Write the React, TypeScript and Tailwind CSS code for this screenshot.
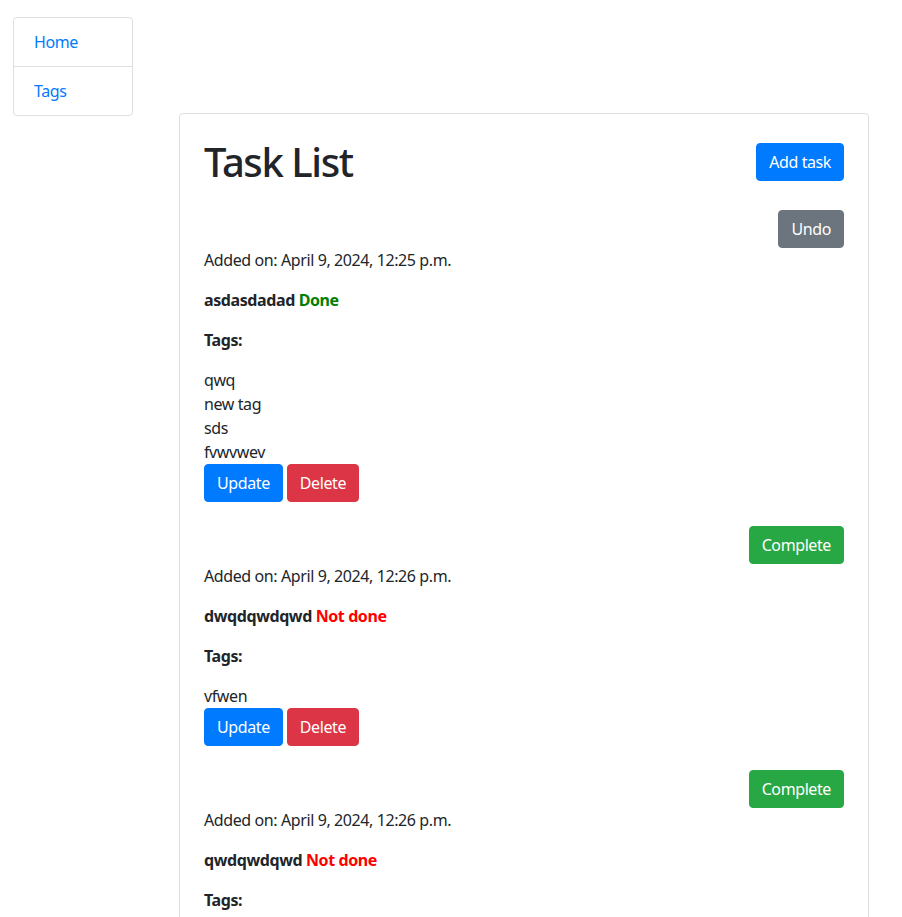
import React from 'react';

type Task = {
  added: string;
  name: string;
  done: boolean;
  tags: string[];
};

const tasks: Task[] = [
  { added: 'April 9, 2024, 12:25 p.m.', name: 'asdasdadad', done: true, tags: ['qwq', 'new tag', 'sds', 'fvwvwev'] },
  { added: 'April 9, 2024, 12:26 p.m.', name: 'dwqdqwdqwd', done: false, tags: ['vfwen'] },
  { added: 'April 9, 2024, 12:26 p.m.', name: 'qwdqwdqwd', done: false, tags: [] },
];

const btn = 'inline-block rounded-[4px] border px-3 py-[6px] text-base leading-6 text-white';

function TaskItem({ task }: { task: Task }) {
  return (
    <div className="mb-6">
      <div className="flex justify-end">
        {task.done ? (
          <button className={`${btn} border-[#6c757d] bg-[#6c757d]`}>Undo</button>
        ) : (
          <button className={`${btn} border-[#28a745] bg-[#28a745]`}>Complete</button>
        )}
      </div>
      <p className="mb-4">Added on: {task.added}</p>
      <p className="mb-4 font-bold">
        {task.name}{' '}
        {task.done ? <span className="text-[#008000]">Done</span> : <span className="text-[#ff0000]">Not done</span>}
      </p>
      <p className="mb-4 font-bold">Tags:</p>
      <ul>
        {task.tags.map((t, i) => (
          <li key={i}>{t}</li>
        ))}
      </ul>
      {task.tags.length > 0 && (
        <div className="flex gap-1">
          <button className={`${btn} border-[#007bff] bg-[#007bff]`}>Update</button>
          <button className={`${btn} border-[#dc3545] bg-[#dc3545]`}>Delete</button>
        </div>
      )}
    </div>
  );
}

export default function App() {
  return (
    <div className="flex min-h-[917px] items-start bg-white text-base leading-6 tracking-tight text-[#212529]" style={{ fontFamily: '"Noto Sans", sans-serif' }}>
      <div className="ml-[13px] mt-[17px] w-[120px] shrink-0 rounded-[4px] border border-[#dfdfdf]">
        <a className="block border-b border-[#dfdfdf] px-5 py-3 text-[#007bff]">Home</a>
        <a className="block px-5 py-3 text-[#007bff]">Tags</a>
      </div>
      <div className="ml-[46px] mt-[113px] w-[690px] shrink-0 rounded-[4px] border border-[#dfdfdf] p-6">
        <div className="mb-6 flex items-center justify-between">
          <h1 className="text-[40px] font-medium leading-[48px] tracking-[-0.035em]">Task List</h1>
          <button className={`${btn} border-[#007bff] bg-[#007bff]`}>Add task</button>
        </div>
        {tasks.map((t, i) => (
          <TaskItem key={i} task={t} />
        ))}
      </div>
    </div>
  );
}
